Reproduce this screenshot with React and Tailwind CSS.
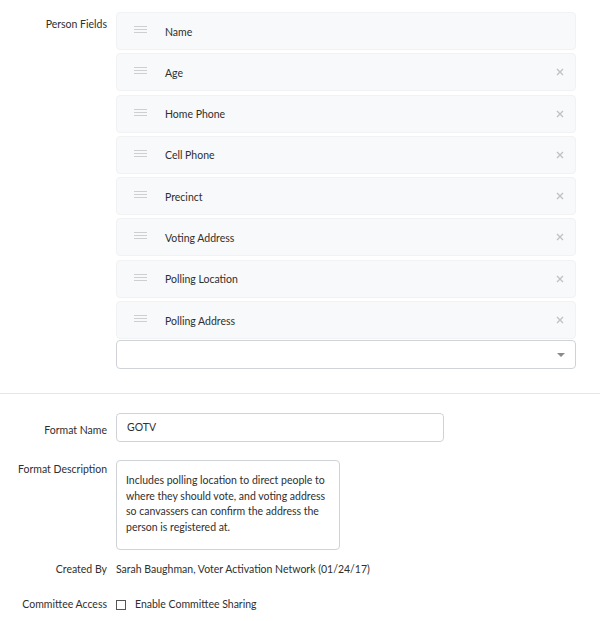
import React from 'react'

const fields = [
  'Name',
  'Age',
  'Home Phone',
  'Cell Phone',
  'Precinct',
  'Voting Address',
  'Polling Location',
  'Polling Address',
]

// three grey bars used as drag handle
const Handle = () => (
  <div className="flex flex-col gap-[2px] w-[13px] -mt-[3px]">
    <div className="h-px bg-[#cfcfcf]" />
    <div className="h-px bg-[#cfcfcf]" />
    <div className="h-px bg-[#cfcfcf]" />
  </div>
)

const RemoveIcon = () => (
  <svg width="8" height="8" viewBox="0 0 8 8" className="text-[#c2c2c2]">
    <path d="M1 1L7 7M7 1L1 7" stroke="currentColor" strokeWidth="1.4" />
  </svg>
)

const FieldRow = ({ label, removable }) => (
  <div className="h-[38px] flex items-center rounded-[4px] bg-[#f8f9fa] border border-[#f1f2f3] pl-[17px] pr-[11px]">
    <Handle />
    <span className="ml-[18px] mt-[2px] flex-1">{label}</span>
    {removable && <RemoveIcon />}
  </div>
)

const App = () => {
  return (
    <div className="w-[600px] h-[621px] bg-white text-[10.5px] leading-[15px] text-[#2f2f2f] font-['Lato',sans-serif]">
      <section className="pt-[12px] flex">
        <div className="w-[107px] text-right pt-[5px]">Person Fields</div>
        <div className="ml-[9px] w-[460px]">
          <div className="flex flex-col gap-[3.3px]">
            {fields.map((f, i) => (
              <FieldRow key={f} label={f} removable={i > 0} />
            ))}
          </div>
          <div className="h-[29px] mt-[1px] border border-[#cfd3d7] rounded-[4px] flex items-center justify-end pr-[10px]">
            <svg width="8" height="4" viewBox="0 0 8 4">
              <path d="M0 0H8L4 4Z" fill="#8a8a8a" />
            </svg>
          </div>
        </div>
      </section>

      <div className="mt-[24px] h-px bg-[#e6e6e6]" />

      <section className="mt-[19px] flex flex-col">
        <div className="flex">
          <div className="w-[107px] text-right pt-[10px]">Format Name</div>
          <div className="ml-[9px] w-[328px] h-[29px] border border-[#cfd3d7] rounded-[4px] flex items-center px-[10px]">
            GOTV
          </div>
        </div>

        <div className="flex mt-[18px]">
          <div className="w-[107px] text-right pt-[2px]">Format Description</div>
          <div className="ml-[9px] w-[224px] h-[90px] border border-[#cfd3d7] rounded-[4px] px-[9px] pt-[12px] leading-[15.7px]">
            Includes polling location to direct people to where they should vote, and voting address so canvassers can confirm the address the person is registered at.
          </div>
        </div>

        <div className="flex mt-[12px]">
          <div className="w-[107px] text-right">Created By</div>
          <div className="ml-[9px]">Sarah Baughman, Voter Activation Network (01/24/17)</div>
        </div>

        <div className="flex items-center mt-[20px]">
          <div className="w-[107px] text-right">Committee Access</div>
          <div className="ml-[9px] w-[10px] h-[10px] border border-[#555]" />
          <div className="ml-[9px]">Enable Committee Sharing</div>
        </div>
      </section>
    </div>
  )
}

export default App
